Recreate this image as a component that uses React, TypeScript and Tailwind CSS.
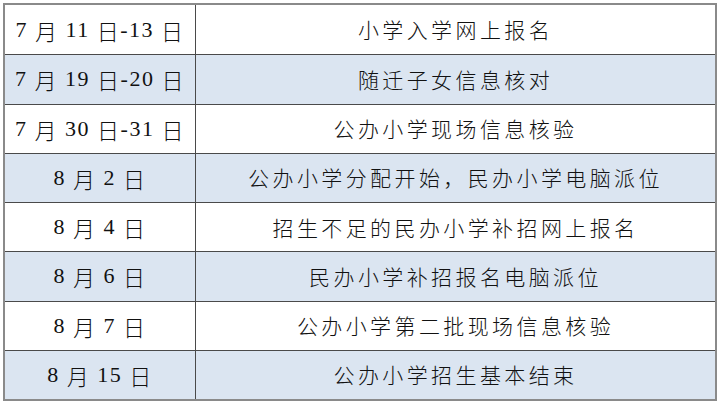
import React from "react";

const rows: [string, string][] = [
  ["7 月 11 日-13 日", "小学入学网上报名"],
  ["7 月 19 日-20 日", "随迁子女信息核对"],
  ["7 月 30 日-31 日", "公办小学现场信息核验"],
  ["8 月 2 日", "公办小学分配开始，民办小学电脑派位"],
  ["8 月 4 日", "招生不足的民办小学补招网上报名"],
  ["8 月 6 日", "民办小学补招报名电脑派位"],
  ["8 月 7 日", "公办小学第二批现场信息核验"],
  ["8 月 15 日", "公办小学招生基本结束"],
];

function DateText({ s }: { s: string }) {
  const parts = s.split(/([月日])/).filter((p) => p.length > 0);
  return (
    <>
      {parts.map((p, i) =>
        p === "月" || p === "日" ? (
          <span
            key={i}
            className="font-light"
            style={{ fontFamily: '"Noto Sans CJK SC", sans-serif' }}
          >
            {p}
          </span>
        ) : (
          <span
            key={i}
            className="whitespace-pre"
            style={{ fontFamily: '"Liberation Serif", serif' }}
          >
            {p}
          </span>
        )
      )}
    </>
  );
}

export default function App() {
  return (
    <div className="w-[720px] h-[403px] bg-white pt-[3px] pl-[3px]">
      <div className="w-[714px] border-2 border-[#8a8a8a] text-[#111]">
        {rows.map(([d, t], i) => (
          <div
            key={i}
            className={`grid grid-cols-[191px_1fr] h-[49.25px] ${i % 2 === 1 ? "bg-[#dbe5f1]" : "bg-white"} ${i > 0 ? "border-t border-[#4a4a4a]" : ""}`}
          >
            <div className="flex items-center justify-center border-r border-[#4a4a4a] text-[22px] tracking-[1.5px] leading-none">
              <DateText s={d} />
            </div>
            <div
              className="flex items-center justify-center text-[21px] tracking-[3.4px] leading-none font-light"
              style={{ fontFamily: '"Noto Sans CJK SC", sans-serif' }}
            >
              {t}
            </div>
          </div>
        ))}
      </div>
    </div>
  );
}
